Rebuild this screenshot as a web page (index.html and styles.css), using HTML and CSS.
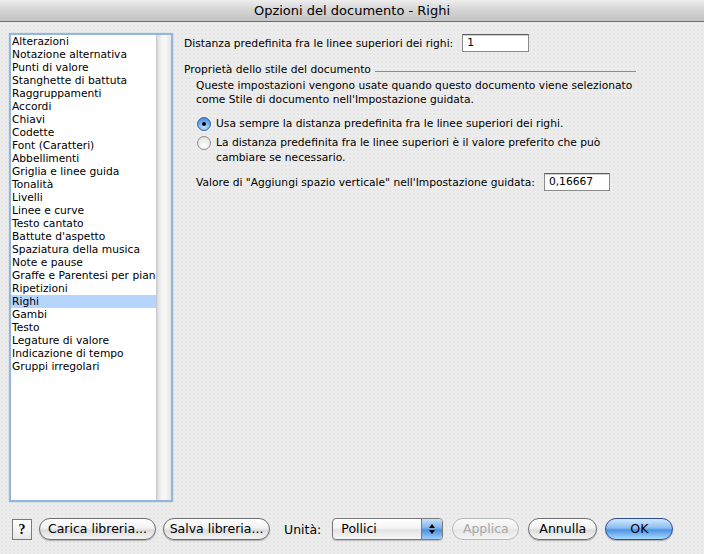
FILE: index.html
```html
<!DOCTYPE html>
<html lang="it">
<head>
<meta charset="utf-8">
<title>Opzioni del documento - Righi</title>
<link rel="stylesheet" href="styles.css">
</head>
<body>
<div class="window">
  <div class="titlebar">Opzioni del documento - Righi</div>
  <div class="main">
    <div class="listbox">
      <ul class="list">
        <li>Alterazioni</li>
        <li>Notazione alternativa</li>
        <li>Punti di valore</li>
        <li>Stanghette di battuta</li>
        <li>Raggruppamenti</li>
        <li>Accordi</li>
        <li>Chiavi</li>
        <li>Codette</li>
        <li>Font (Caratteri)</li>
        <li>Abbellimenti</li>
        <li>Griglia e linee guida</li>
        <li>Tonalità</li>
        <li>Livelli</li>
        <li>Linee e curve</li>
        <li>Testo cantato</li>
        <li>Battute d'aspetto</li>
        <li>Spaziatura della musica</li>
        <li>Note e pause</li>
        <li>Graffe e Parentesi per piano</li>
        <li>Ripetizioni</li>
        <li class="sel">Righi</li>
        <li>Gambi</li>
        <li>Testo</li>
        <li>Legature di valore</li>
        <li>Indicazione di tempo</li>
        <li>Gruppi irregolari</li>
      </ul>
      <div class="scrolltrack"></div>
    </div>
    <div class="panel">
      <div class="row first">
        <span>Distanza predefinita fra le linee superiori dei righi:</span>
        <span class="field f1">1</span>
      </div>
      <div class="group-title">
        <span>Proprietà dello stile del documento</span>
        <span class="rule"></span>
      </div>
      <div class="group">
        <p class="desc">Queste impostazioni vengono usate quando questo documento viene selezionato<br>come Stile di documento nell'Impostazione guidata.</p>
        <div class="radio on"><span class="dot"></span><span>Usa sempre la distanza predefinita fra le linee superiori dei righi.</span></div>
        <div class="radio"><span class="dot"></span><span>La distanza predefinita fra le linee superiori è il valore preferito che può<br>cambiare se necessario.</span></div>
        <div class="row last">
          <span>Valore di "Aggiungi spazio verticale" nell'Impostazione guidata:</span>
          <span class="field f2">0,16667</span>
        </div>
      </div>
    </div>
  </div>
  <div class="footer">
    <span class="help">?</span>
    <span class="btn carica">Carica libreria...</span>
    <span class="btn salva">Salva libreria...</span>
    <span class="label">Unità:</span>
    <span class="popup"><span class="ptext">Pollici</span><span class="arrows"><svg width="8" height="12" viewBox="0 0 8 12"><path d="M4 1 L7 5 L1 5 Z" fill="#000"/><path d="M4 11 L7 7 L1 7 Z" fill="#000"/></svg></span></span>
    <span class="btn applica">Applica</span>
    <span class="btn annulla">Annulla</span>
    <span class="btn ok">OK</span>
  </div>
</div>
</body>
</html>
```

FILE: styles.css
```css
html, body {
  margin: 0;
  padding: 0;
}
body {
  width: 704px;
  height: 554px;
  overflow: hidden;
  font-family: "DejaVu Sans", "Liberation Sans", sans-serif;
  font-size: 10.7px;
  color: #000;
}
.window {
  width: 704px;
  height: 554px;
  display: flex;
  flex-direction: column;
  background-color: #ececec;
  background-image: radial-gradient(circle, #e2e2e2 0.6px, transparent 0.9px);
  background-size: 4px 4px;
}
.titlebar {
  height: 21px;
  border-bottom: 1px solid #6e6e6e;
  background: linear-gradient(#eeeeee, #d6d6d6 45%, #c3c3c3);
  font-size: 13px;
  text-align: center;
  line-height: 21px;
  border-radius: 5px 5px 0 0;
}
.main {
  display: flex;
  padding: 11px 0 0 9px;
  height: 471px;
}
.listbox {
  width: 160px;
  height: 465px;
  border: 2px solid #93b6de;
  box-shadow: 0 0 1px #5d8fd0;
  background: #fff;
  display: flex;
  border-radius: 1px;
}
.list {
  list-style: none;
  margin: 0;
  padding: 0;
  width: 146px;
  overflow: hidden;
  line-height: 13px;
}
.list li {
  padding-left: 1px;
  white-space: nowrap;
  overflow: hidden;
  height: 13px;
}
.list li.sel {
  background: #b5d5ff;
}
.scrolltrack {
  width: 14px;
  background: linear-gradient(90deg, #d8d8d8, #f4f4f4 30%, #f8f8f8 60%, #e4e4e4);
  border-left: 1px solid #c8c8c8;
}
.panel {
  margin-left: 11px;
  width: 452px;
}
.row {
  display: flex;
  align-items: center;
}
.row.first {
  height: 18px;
  margin-top: 1px;
}
.field {
  display: inline-block;
  height: 16px;
  line-height: 16px;
  background: #fff;
  border: 1px solid #8a8a8a;
  border-top-color: #5c5c5c;
  box-shadow: inset 0 1px 0 #d0d0d0;
  padding-left: 4px;
  box-sizing: content-box;
}
.f1 {
  width: 61px;
  margin-left: 9px;
}
.f2 {
  width: 60px;
  margin-left: 9px;
}
.group-title {
  display: flex;
  align-items: center;
  margin-top: 11px;
  height: 12px;
}
.rule {
  flex: 1;
  border-top: 1px solid #8c8c8c;
  margin-left: 4px;
  margin-top: 4px;
}
.group {
  padding-left: 12px;
}
.desc {
  margin: 4px 0 0 0;
  line-height: 14px;
}
.radio {
  display: flex;
  align-items: flex-start;
  line-height: 15px;
  margin-top: 4px;
}
.radio.on {
  margin-top: 9px;
}
.dot {
  width: 12px;
  height: 12px;
  border-radius: 50%;
  border: 1px solid #8c8c8c;
  background: radial-gradient(circle at 50% 70%, #ffffff, #e6e6e6 70%, #cfcfcf);
  margin: 1px 5px 0 1px;
  flex: none;
  position: relative;
}
.radio.on .dot {
  border-color: #3f64a8;
  background: radial-gradient(circle at 50% 75%, #bfe2ff, #6fa8e8 55%, #3a74c8);
}
.radio.on .dot::after {
  content: "";
  position: absolute;
  left: 4px;
  top: 4px;
  width: 4px;
  height: 4px;
  border-radius: 50%;
  background: #000;
}
.row.last {
  margin-top: 8px;
  height: 18px;
}
.footer {
  display: flex;
  align-items: center;
  padding: 14px 0 0 12px;
  font-size: 12.5px;
}
.help {
  width: 18px;
  height: 19px;
  border: 1px solid #7a7a7a;
  background: linear-gradient(#ffffff, #e8e8e8);
  font-family: "Liberation Serif", serif;
  font-weight: bold;
  font-size: 14px;
  text-align: center;
  line-height: 19px;
  margin-right: 7px;
}
.btn {
  height: 20px;
  line-height: 20px;
  border: 1px solid #6e6e6e;
  border-radius: 11px;
  background: linear-gradient(#ffffff, #f2f2f2 45%, #dcdcdc 55%, #f4f4f4);
  text-align: center;
  box-shadow: 0 1px 1px rgba(0,0,0,0.25);
}
.carica { width: 115px; }
.salva { width: 105px; margin-left: 7px; }
.label { margin-left: 14px; }
.popup {
  margin-left: 11px;
  width: 109px;
  height: 20px;
  border: 1px solid #7a7a7a;
  border-radius: 4px;
  display: flex;
  background: linear-gradient(#ffffff, #f4f4f4 45%, #e2e2e2 55%, #f8f8f8);
  box-shadow: 0 1px 1px rgba(0,0,0,0.2);
  overflow: hidden;
}
.ptext {
  flex: 1;
  padding-left: 8px;
  line-height: 20px;
}
.arrows {
  width: 20px;
  display: flex;
  align-items: center;
  justify-content: center;
  background: linear-gradient(#c7e1fb, #7fb2ea 45%, #4d8fe0 55%, #9fd0fb);
  border-left: 1px solid #5580c0;
}
.applica {
  width: 65px;
  margin-left: 9px;
  color: #a8a8a8;
  border-color: #b8b8b8;
  box-shadow: none;
  background: linear-gradient(#fafafa, #f0f0f0 45%, #e6e6e6 55%, #f4f4f4);
}
.annulla { width: 67px; margin-left: 9px; }
.ok {
  width: 66px;
  margin-left: 8px;
  border-color: #2a4f9a;
  background: linear-gradient(#d2e8ff, #8bbcf0 45%, #4e94e6 55%, #a8dcff);
}
```
